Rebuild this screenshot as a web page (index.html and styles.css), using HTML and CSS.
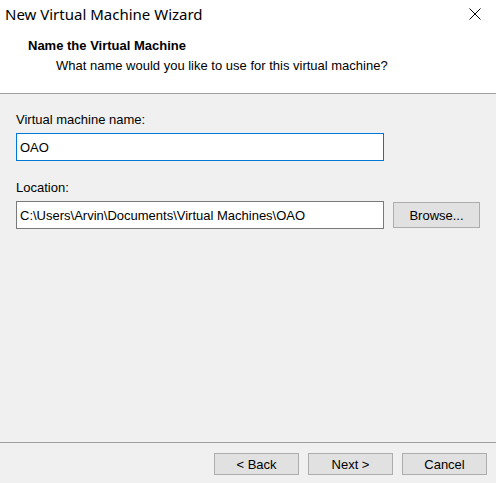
FILE: index.html
```html
<!DOCTYPE html>
<html lang="en">
<head>
    <meta charset="UTF-8">
    <title>New Virtual Machine Wizard</title>
    <link rel="stylesheet" href="styles.css">
</head>
<body>
    <div class="wizard">
        <div class="titlebar">
            <span class="title">New Virtual Machine Wizard</span>
            <svg class="close" width="12" height="12" viewBox="0 0 12 12">
                <path d="M0.5 0.5 L11.5 11.5 M11.5 0.5 L0.5 11.5" stroke="#000" stroke-width="1"/>
            </svg>
        </div>
        <div class="header">
            <div class="heading">Name the Virtual Machine</div>
            <div class="subheading">What name would you like to use for this virtual machine?</div>
        </div>
        <div class="content">
            <label class="field-label">Virtual machine name:</label>
            <div class="row">
                <input type="text" class="textbox focused" value="OAO">
            </div>
            <label class="field-label second">Location:</label>
            <div class="row">
                <input type="text" class="textbox" value="C:\Users\Arvin\Documents\Virtual Machines\OAO">
                <button class="btn browse">Browse...</button>
            </div>
        </div>
        <div class="footer">
            <button class="btn">&lt; Back</button>
            <button class="btn">Next &gt;</button>
            <button class="btn">Cancel</button>
        </div>
    </div>
</body>
</html>
```

FILE: styles.css
```css
html, body {
    margin: 0;
    height: 100%;
}
body {
    font-family: "Liberation Sans", Arial, sans-serif;
    font-size: 13px;
    color: #000;
    background: #fff;
}
.wizard {
    display: flex;
    flex-direction: column;
    height: 483px;
    width: 496px;
}
.titlebar {
    height: 30px;
    display: flex;
    align-items: center;
    justify-content: space-between;
    padding: 0 15px 0 5px;
    background: #fff;
}
.title {
    font-family: "Noto Sans", "Open Sans", sans-serif;
    font-size: 15px;
    line-height: 28px;
    margin-top: -3px;
}
.close {
    margin-top: -3px;
}
.header {
    height: 64px;
    border-bottom: 1px solid #a0a0a0;
    padding-top: 8px;
    box-sizing: border-box;
}
.heading {
    font-weight: bold;
    line-height: 16px;
    padding-left: 28px;
}
.subheading {
    line-height: 16px;
    padding-left: 56px;
    margin-top: 4px;
}
.content {
    flex: 1;
    background: #f0f0f0;
    padding: 18px 0 0 16px;
    display: flex;
    flex-direction: column;
}
.field-label {
    line-height: 16px;
    margin-bottom: 5px;
}
.field-label.second {
    margin-top: 19px;
    margin-bottom: 5px;
}
.row {
    display: flex;
    align-items: center;
    gap: 9px;
}
.textbox {
    width: 368px;
    height: 28px;
    box-sizing: border-box;
    border: 1px solid #7a7a7a;
    background: #fff;
    font-family: "Liberation Sans", Arial, sans-serif;
    font-size: 13px;
    padding: 0 3px;
    margin: 0;
    outline: none;
    color: #000;
}
.textbox.focused {
    border-color: #0078d7;
}
.btn {
    width: 85px;
    height: 22px;
    box-sizing: border-box;
    border: 1px solid #adadad;
    background: #e1e1e1;
    font-family: "Liberation Sans", Arial, sans-serif;
    font-size: 13px;
    color: #000;
    padding: 0;
    margin: 0;
}
.btn.browse {
    width: 87px;
    height: 26px;
}
.footer {
    height: 41px;
    border-top: 1px solid #a0a0a0;
    background: #f0f0f0;
    display: flex;
    justify-content: flex-end;
    gap: 9px;
    padding: 10px 9px 0 0;
    box-sizing: border-box;
}
```
